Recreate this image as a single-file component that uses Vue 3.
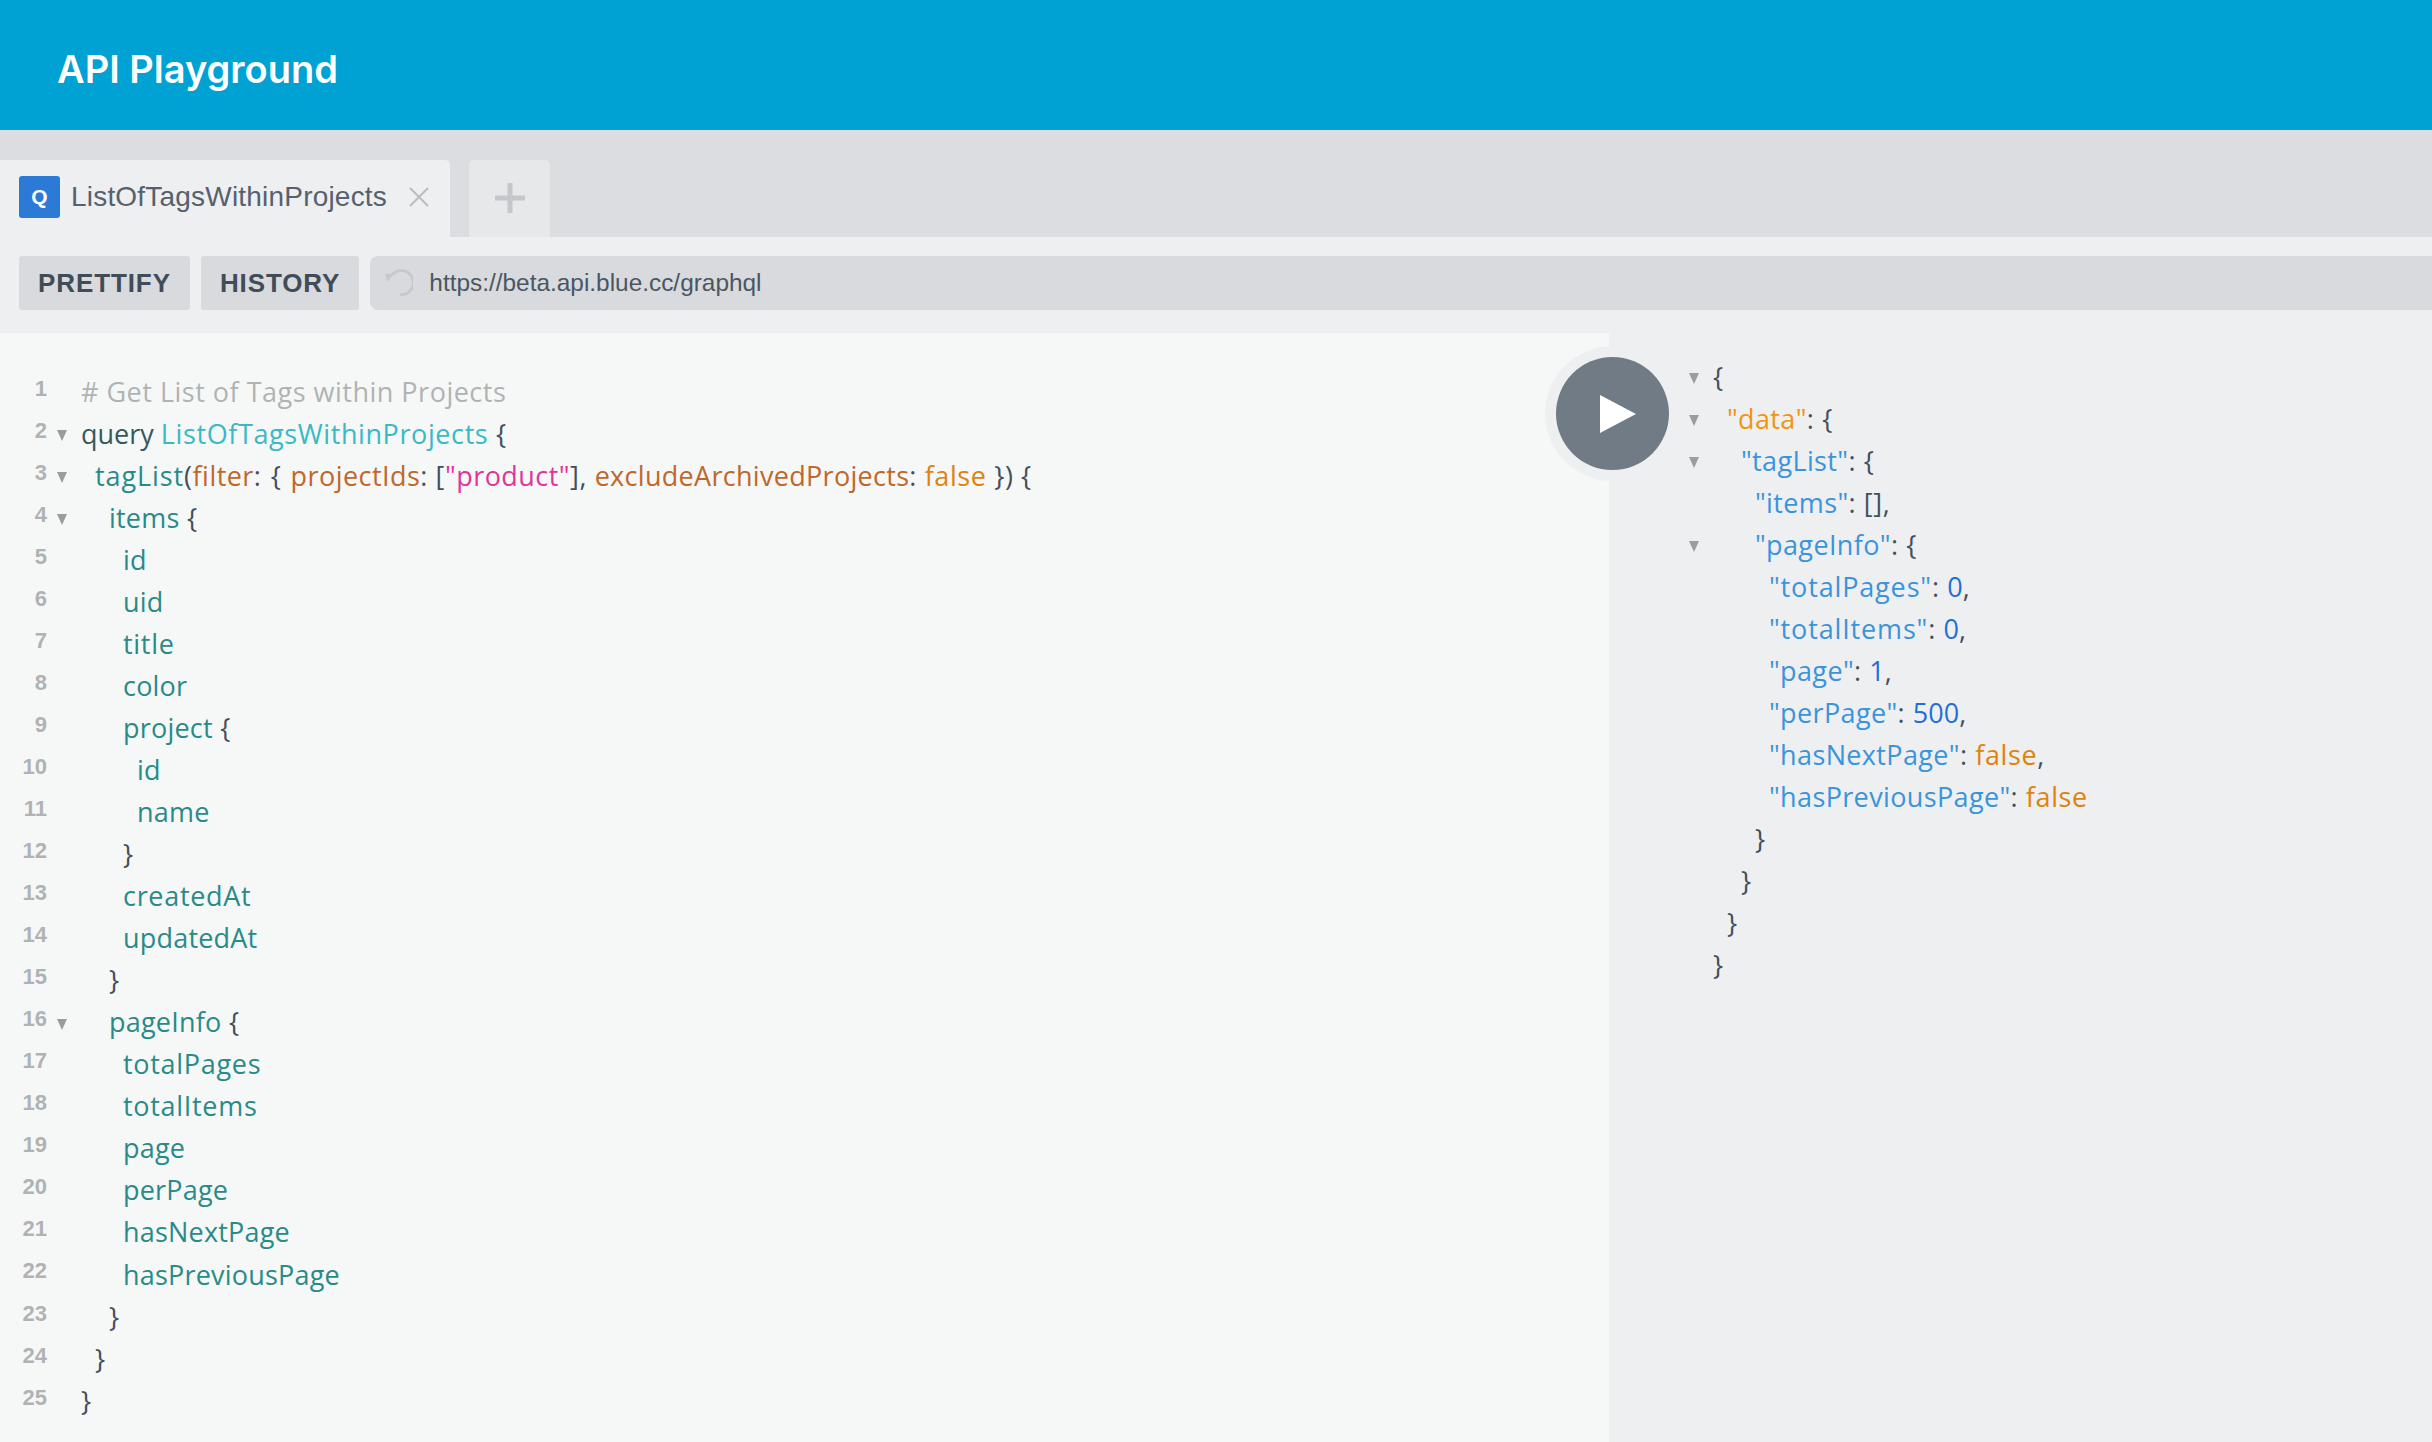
<script setup>
const q = 'kw', d = 'def', p = 'pun', f = 'prop', a = 'attr', s = 'str', b = 'bool', c = 'com', w = 'prop-wide', pw = 'pun-wide'
const editor = [
  { i: 0, t: [['# Get List of Tags within Projects', c]] },
  { i: 0, fold: 1, t: [['query ', q], ['ListOfTagsWithinProjects', d], [' {', p]] },
  { i: 1, fold: 1, t: [['tagList', 'prop-tag'], ['(', p], ['filter', a], [': { ', pw], ['projectIds', a], [': [', p], ['"product"', s], ['], ', p], ['excludeArchivedProjects', 'attr-long'], [': ', p], ['false', b], [' }) {', p]] },
  { i: 2, fold: 1, t: [['items', f], [' {', p]] },
  { i: 3, t: [['id', f]] },
  { i: 3, t: [['uid', f]] },
  { i: 3, t: [['title', w]] },
  { i: 3, t: [['color', f]] },
  { i: 3, t: [['project', f], [' {', p]] },
  { i: 4, t: [['id', f]] },
  { i: 4, t: [['name', f]] },
  { i: 3, t: [['}', p]] },
  { i: 3, t: [['createdAt', w]] },
  { i: 3, t: [['updatedAt', f]] },
  { i: 2, t: [['}', p]] },
  { i: 2, fold: 1, t: [['pageInfo', f], [' {', p]] },
  { i: 3, t: [['totalPages', w]] },
  { i: 3, t: [['totalItems', w]] },
  { i: 3, t: [['page', f]] },
  { i: 3, t: [['perPage', f]] },
  { i: 3, t: [['hasNextPage', f]] },
  { i: 3, t: [['hasPreviousPage', f]] },
  { i: 2, t: [['}', p]] },
  { i: 1, t: [['}', p]] },
  { i: 0, t: [['}', p]] },
]
const k = 'key', o = 'key-top', n = 'num', kw = 'key-wide'
const result = [
  { i: 0, fold: 1, t: [['{', p]] },
  { i: 1, fold: 1, t: [['"data"', o], [': {', p]] },
  { i: 2, fold: 1, t: [['"tagList"', k], [': {', p]] },
  { i: 3, t: [['"items"', k], [': [],', p]] },
  { i: 3, fold: 1, t: [['"pageInfo"', k], [': {', p]] },
  { i: 4, t: [['"totalPages"', kw], [': ', p], ['0', n], [',', p]] },
  { i: 4, t: [['"totalItems"', kw], [': ', p], ['0', n], [',', p]] },
  { i: 4, t: [['"page"', k], [': ', p], ['1', n], [',', p]] },
  { i: 4, t: [['"perPage"', k], [': ', p], ['500', n], [',', p]] },
  { i: 4, t: [['"hasNextPage"', k], [': ', p], ['false', b], [',', p]] },
  { i: 4, t: [['"hasPreviousPage"', k], [': ', p], ['false', b]] },
  { i: 3, t: [['}', p]] },
  { i: 2, t: [['}', p]] },
  { i: 1, t: [['}', p]] },
  { i: 0, t: [['}', p]] },
]
</script>

<template>
  <div class="app">
    <header class="head"><h1>API Playground</h1></header>
    <div class="tabs">
      <div class="tab">
        <span class="badge">Q</span>
        <span class="tab-name">ListOfTagsWithinProjects</span>
        <svg class="close" viewBox="0 0 20 20" width="20" height="20"><path d="M1 1 19 19M19 1 1 19" stroke="#b9bcc0" stroke-width="2" fill="none"/></svg>
      </div>
      <div class="add">
        <svg viewBox="0 0 32 32" width="32" height="32"><path d="M16 1v30M1 16h30" stroke="#c4c8cc" stroke-width="5" fill="none"/></svg>
      </div>
    </div>
    <div class="toolbar">
      <button class="btn">PRETTIFY</button>
      <button class="btn">HISTORY</button>
      <div class="url">
        <svg viewBox="0 0 28 28" width="28" height="28"><path d="M7 6A12 12 0 1 1 15 25.500" stroke="#c6c9cb" stroke-width="2.800" fill="none"/><path d="M0 5 9 4.500 2.500 13Z" fill="#c6c9cb"/></svg>
        <span>https://beta.api.blue.cc/graphql</span>
      </div>
    </div>
    <main class="main">
      <section class="editor">
        <div v-for="(l, x) in editor" :key="x" class="row">
          <span class="ln">{{ x + 1 }}</span>
          <span class="fold"><i v-if="l.fold" class="arrow"></i></span>
          <span class="code" :style="{ paddingLeft: l.i * 14 + 'px' }"><span v-for="(t, y) in l.t" :key="y" :class="t[1]">{{ t[0] }}</span></span>
        </div>
      </section>
      <section class="results">
        <div v-for="(l, x) in result" :key="x" class="row">
          <span class="fold"><i v-if="l.fold" class="arrow"></i></span>
          <span class="code" :style="{ paddingLeft: l.i * 14 + 'px' }"><span v-for="(t, y) in l.t" :key="y" :class="t[1]">{{ t[0] }}</span></span>
        </div>
      </section>
      <div class="run">
        <div class="run-btn">
          <svg viewBox="0 0 36 38" width="36" height="38"><path d="M0 0 36 19 0 38Z" fill="#fff"/></svg>
        </div>
      </div>
    </main>
  </div>
</template>

<style>
html, body { margin: 0; background: #eeeff1; overflow: hidden; }
</style>

<style scoped>
.app { height: 1442px; display: flex; flex-direction: column; overflow: hidden; }
.head { height: 130px; background: #00a1d3; display: flex; align-items: center; padding: 8px 0 0 57px; flex: none; box-sizing: border-box; }
.head h1 { margin: 0; color: #fff; font: 600 38px Inter, sans-serif; }
.tabs { height: 107px; background: #dcdde0; display: flex; align-items: flex-end; flex: none; }
.tab { width: 450px; height: 77px; background: #eeeff1; border-radius: 0 5px 0 0; display: flex; align-items: center; padding: 0 0 3px 19px; box-sizing: border-box; }
.badge { width: 41px; height: 42px; background: #2b7ad6; color: #fff; border-radius: 3px; display: flex; align-items: center; justify-content: center; font: 700 21px "Liberation Sans", sans-serif; }
.tab-name { margin-left: 11px; width: 338px; color: #56616d; font: 400 28px "Liberation Sans", sans-serif; letter-spacing: .2px; }
.close { flex: none; }
.add { width: 81px; height: 77px; margin-left: 19px; background: #e7e8ea; border-radius: 5px 5px 0 0; display: flex; align-items: center; justify-content: center; padding-bottom: 2px; box-sizing: border-box; }
.toolbar { height: 96px; background: #eeeff1; display: flex; align-items: center; gap: 11px; padding: 0 0 4px 19px; flex: none; box-sizing: border-box; }
.btn { height: 54px; border: 0; background: #d9dadd; border-radius: 3px; color: #404d59; padding: 0 19px; font: 700 26px "Liberation Sans", sans-serif; letter-spacing: .9px; }
.url { flex: 1; height: 54px; background: #d9dadd; border-radius: 8px 0 0 8px; display: flex; align-items: center; gap: 16px; padding-left: 15px; color: #4a5663; font: 400 24.4px "Liberation Sans", sans-serif; }
.main { flex: 1; display: flex; position: relative; min-height: 0; }
.editor { width: 1609px; background: #f6f8f8; padding-top: 36.5px; box-sizing: border-box; border-top: 1px solid #f3f4f5; }
.results { flex: 1; background: #eeeff1; padding: 23px 0 0 80px; }
.row { display: flex; height: 42.05px; align-items: center; }
.results .row { height: 42px; }
.ln { width: 47px; text-align: right; color: #b0b3b3; font: 700 22px/36px "Liberation Sans", sans-serif; align-self: flex-start; }
.editor .fold { width: 34px; padding: 4px 0 0 10px; }
.results .fold { width: 24px; padding-top: 2px; }
.fold { display: flex; box-sizing: border-box; flex: none; }
.arrow { width: 0; height: 0; border-left: 5.5px solid transparent; border-right: 5.5px solid transparent; border-top: 11px solid #9c9c9c; }
.code { white-space: pre; font: 400 27px/42px "Open Sans", sans-serif; color: #444f5c; }
.com { color: #b0b3b3; letter-spacing: .5px; }
.kw { color: #37595c; }
.def { color: #39b9c6; letter-spacing: .6px; }
.pun { color: #444f5c; letter-spacing: .6px; }
.pun-wide { color: #444f5c; letter-spacing: 1.35px; }
.prop { color: #2a8a88; letter-spacing: .2px; }
.prop-wide { color: #2a8a88; letter-spacing: .7px; }
.prop-tag { color: #2a8a88; letter-spacing: .9px; }
.attr { color: #c0672a; letter-spacing: .45px; }
.attr-long { color: #c0672a; letter-spacing: .3px; }
.str { color: #e0359a; letter-spacing: .45px; }
.bool { color: #e0820e; letter-spacing: .6px; }
.key-top { color: #f0950f; letter-spacing: .36px; }
.key { color: #3a94dc; letter-spacing: .36px; }
.key-wide { color: #3a94dc; letter-spacing: .85px; }
.num { color: #1f6fd8; }
.run { position: absolute; left: 1545px; top: 13px; width: 135px; height: 135px; border-radius: 50%; background: #eeeff1; display: flex; align-items: center; justify-content: center; }
.run-btn { width: 113px; height: 113px; border-radius: 50%; background: #707b85; display: flex; align-items: center; justify-content: center; padding-left: 11px; box-sizing: border-box; }
</style>
